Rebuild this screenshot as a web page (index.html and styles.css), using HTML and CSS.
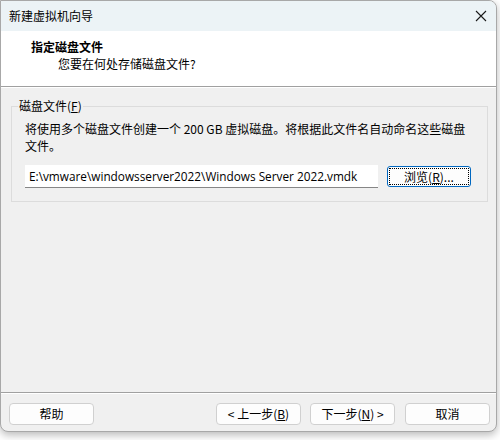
FILE: index.html
```html
<!DOCTYPE html>
<html>
<head>
<meta charset="utf-8">
<link rel="stylesheet" href="styles.css">
</head>
<body>
<div class="window">
  <div class="titlebar">
    <span class="title">新建虚拟机向导</span>
    <svg class="close" width="12" height="12" viewBox="0 0 12 12"><path d="M1 1 L11 11 M11 1 L1 11" stroke="#1a1a1a" stroke-width="1.1" fill="none"/></svg>
  </div>
  <div class="header">
    <div class="h-title">指定磁盘文件</div>
    <div class="h-sub">您要在何处存储磁盘文件?</div>
  </div>
  <div class="body">
    <fieldset class="group">
      <legend class="legend">磁盘文件(<u>F</u>)</legend>
      <p class="desc">将使用多个磁盘文件创建一个 200 GB 虚拟磁盘。将根据此文件名自动命名这些磁盘文件。</p>
      <div class="row">
        <div class="input">E:\vmware\windowsserver2022\Windows Server 2022.vmdk</div>
        <button class="btn browse"><span class="focus">浏览(<u>R</u>)...</span></button>
      </div>
    </fieldset>
  </div>
  <div class="footer">
    <button class="btn">帮助</button>
    <div class="spacer"></div>
    <button class="btn">&lt; 上一步(<u>B</u>)</button>
    <button class="btn next">下一步(<u>N</u>) &gt;</button>
    <button class="btn cancel">取消</button>
  </div>
</div>
</body>
</html>
```
FILE: styles.css
```css
html, body {
  margin: 0;
  padding: 0;
  background: #ffffff;
}
body {
  width: 500px;
  height: 440px;
  overflow: hidden;
  font-family: "Noto Sans CJK SC", "Noto Sans", sans-serif;
  font-size: 12px;
  color: #000;
}
.window {
  box-sizing: border-box;
  width: 497px;
  height: 432px;
  border: 1px solid #a8a8a8;
  border-radius: 0 8px 8px 8px;
  background: #f0f0f0;
  box-shadow: 0 3px 8px rgba(0,0,0,0.28);
  display: flex;
  flex-direction: column;
  overflow: hidden;
}
.titlebar {
  height: 30px;
  background: #ecf3f6;
  display: flex;
  align-items: center;
  padding-left: 8px;
  padding-right: 9px;
  flex: none;
}
.title {
  flex: 1;
  line-height: 16px;
}
.close {
  display: block;
}
.header {
  height: 56px;
  background: #fff;
  border-bottom: 1px solid #a0a0a0;
  box-sizing: border-box;
  padding-top: 7px;
  flex: none;
}
.h-title {
  font-weight: bold;
  padding-left: 30px;
  line-height: 17px;
}
.h-sub {
  padding-left: 57px;
  line-height: 17px;
}
.body {
  flex: 1;
  border-top: 1px solid #fff;
  border-bottom: 1px solid #a0a0a0;
  padding: 10px 8px 0 10px;
}
.group {
  margin: 0;
  border: 1px solid #dcdcdc;
  padding: 6px 12px 13px 13px;
  border-radius: 0;
}
.legend {
  padding: 0 1px;
  margin-left: -7px;
  line-height: 16px;
}
.desc {
  margin: 0;
  line-height: 17px;
  width: 450px;
}
.row {
  display: flex;
  align-items: center;
  margin-top: 11px;
}
.input {
  box-sizing: border-box;
  width: 353px;
  height: 23px;
  background: #fff;
  border-bottom: 1px solid #868686;
  padding-left: 4px;
  line-height: 22px;
  font-family: "Open Sans", "Noto Sans CJK SC", sans-serif;
  font-size: 11.8px;
  white-space: nowrap;
  overflow: hidden;
}
.btn {
  box-sizing: border-box;
  width: 85px;
  height: 22px;
  background: #fdfdfd;
  border: 1px solid #d0d0d0;
  border-radius: 4px;
  font-family: "Noto Sans CJK SC", "Noto Sans", sans-serif;
  font-size: 12px;
  color: #000;
  padding: 0;
  line-height: 18px;
}
.browse {
  width: 84px;
  height: 21px;
  margin-left: 9px;
  border: 1px solid #0067c0;
  border-radius: 3px;
  padding: 1px;
  display: flex;
}
.focus {
  flex: 1;
  border: 1px dotted #000;
  line-height: 15px;
}
.footer {
  height: 38px;
  flex: none;
  display: flex;
  align-items: flex-start;
  padding: 9px 6px 0 8px;
  box-sizing: border-box;
  border-top: 1px solid #fff;
}
.spacer {
  flex: 1;
}
.back {
  margin-right: 0;
}
.next {
  margin-left: 9px;
}
.cancel {
  margin-left: 10px;
}
```
